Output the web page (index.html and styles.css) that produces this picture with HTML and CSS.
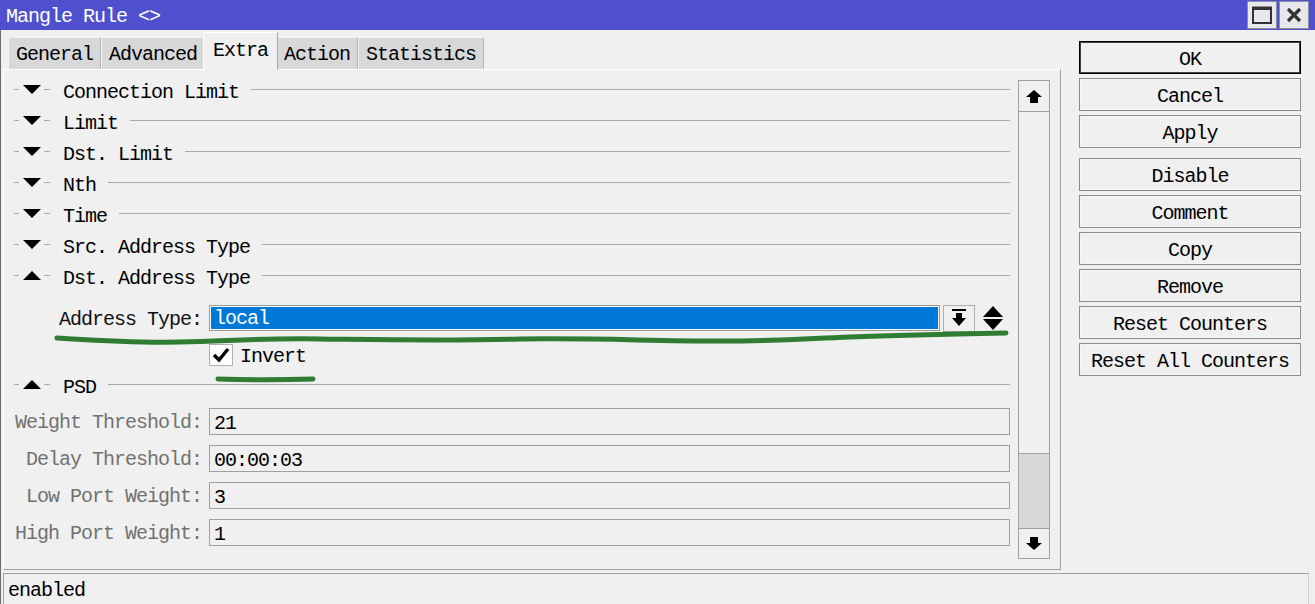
FILE: index.html
```html
<!DOCTYPE html>
<html>
<head>
<meta charset="utf-8">
<link rel="stylesheet" href="styles.css">
</head>
<body>
<div class="window">
  <div class="titlebar">
    <div class="title">Mangle Rule &lt;&gt;</div>
    <div class="wbtns">
      <div class="wbtn"><svg width="20" height="18" viewBox="0 0 20 18"><rect x="1" y="1.5" width="18" height="15.5" fill="none" stroke="#333" stroke-width="2"/><rect x="1" y="1" width="18" height="3" fill="#333"/></svg></div>
      <div class="wbtn"><svg width="18" height="18" viewBox="0 0 18 18"><path d="M3 3 L15 15 M15 3 L3 15" stroke="#333" stroke-width="3.2"/></svg></div>
    </div>
  </div>
  <div class="lower">
    <div class="main">
      <div class="leftcol">
        <div class="tabs">
          <div class="tab">General</div>
          <div class="tab">Advanced</div>
          <div class="tab active">Extra</div>
          <div class="tab">Action</div>
          <div class="tab">Statistics</div>
        </div>
        <div class="panel">
          <div class="content">
            <div class="sect"><span class="dash"></span><svg class="tri" width="18" height="9" viewBox="0 0 18 9"><path d="M0 0 H18 L9 9 Z"/></svg><span class="dash d2"></span><span class="stext">Connection Limit</span><span class="sline"></span></div>
            <div class="sect"><span class="dash"></span><svg class="tri" width="18" height="9" viewBox="0 0 18 9"><path d="M0 0 H18 L9 9 Z"/></svg><span class="dash d2"></span><span class="stext">Limit</span><span class="sline"></span></div>
            <div class="sect"><span class="dash"></span><svg class="tri" width="18" height="9" viewBox="0 0 18 9"><path d="M0 0 H18 L9 9 Z"/></svg><span class="dash d2"></span><span class="stext">Dst. Limit</span><span class="sline"></span></div>
            <div class="sect"><span class="dash"></span><svg class="tri" width="18" height="9" viewBox="0 0 18 9"><path d="M0 0 H18 L9 9 Z"/></svg><span class="dash d2"></span><span class="stext">Nth</span><span class="sline"></span></div>
            <div class="sect"><span class="dash"></span><svg class="tri" width="18" height="9" viewBox="0 0 18 9"><path d="M0 0 H18 L9 9 Z"/></svg><span class="dash d2"></span><span class="stext">Time</span><span class="sline"></span></div>
            <div class="sect"><span class="dash"></span><svg class="tri" width="18" height="9" viewBox="0 0 18 9"><path d="M0 0 H18 L9 9 Z"/></svg><span class="dash d2"></span><span class="stext">Src. Address Type</span><span class="sline"></span></div>
            <div class="sect"><span class="dash"></span><svg class="tri" width="18" height="9" viewBox="0 0 18 9"><path d="M0 9 H18 L9 0 Z"/></svg><span class="dash d2"></span><span class="stext">Dst. Address Type</span><span class="sline"></span></div>
            <div class="frow addr">
              <div class="flabel dark">Address Type:</div>
              <div class="fin sel"><span>local</span></div>
              <div class="ddbtn"><svg width="16" height="18" viewBox="0 0 16 18"><rect x="1" y="0" width="14" height="2"/><rect x="5" y="4" width="6" height="6"/><path d="M1 9 H15 L8 17 Z"/></svg></div>
              <svg class="updown" width="20" height="24" viewBox="0 0 20 24"><path d="M10 0 L20 11 H0 Z M0 13 H20 L10 24 Z"/></svg>
            </div>
            <div class="chkrow">
              <div class="chk"><svg width="18" height="16" viewBox="0 0 18 16"><path d="M2 8 L7 13 L16 2" fill="none" stroke="#000" stroke-width="3.4"/></svg></div>
              <span class="chktext">Invert</span>
            </div>
            <div class="sect psd"><span class="dash"></span><svg class="tri" width="18" height="9" viewBox="0 0 18 9"><path d="M0 9 H18 L9 0 Z"/></svg><span class="dash d2"></span><span class="stext">PSD</span><span class="sline"></span></div>
            <div class="frow fld"><div class="flabel">Weight Threshold:</div><div class="fin">21</div></div>
            <div class="frow fld"><div class="flabel">Delay Threshold:</div><div class="fin">00:00:03</div></div>
            <div class="frow fld"><div class="flabel">Low Port Weight:</div><div class="fin">3</div></div>
            <div class="frow fld"><div class="flabel">High Port Weight:</div><div class="fin">1</div></div>
          </div>
          <div class="scroll">
            <div class="sbtn"><svg width="16" height="13" viewBox="0 0 16 13"><path d="M8 0 L16 7 H12 V13 H4 V7 H0 Z"/></svg></div>
            <div class="strack"></div>
            <div class="sthumb"></div>
            <div class="sbtn down"><svg width="16" height="13" viewBox="0 0 16 13"><path d="M4 0 H12 V6 H16 L8 13 L0 6 H4 Z"/></svg></div>
          </div>
        </div>
      </div>
      <div class="btncol">
        <div class="btn ok">OK</div>
        <div class="btn">Cancel</div>
        <div class="btn">Apply</div>
        <div class="btn sep">Disable</div>
        <div class="btn">Comment</div>
        <div class="btn">Copy</div>
        <div class="btn">Remove</div>
        <div class="btn">Reset Counters</div>
        <div class="btn">Reset All Counters</div>
      </div>
    </div>
    <div class="status">enabled</div>
  </div>
  <svg class="annot" width="1315" height="604" viewBox="0 0 1315 604">
    <path d="M57 338 C90 340 130 343 180 342 C230 341 260 338 320 339 C400 340 450 341 520 339 C600 338 650 341 720 341 C780 341 800 339 850 337 C900 335 950 334 1006 333" fill="none" stroke="#2e7d32" stroke-width="5" stroke-linecap="round"/>
    <path d="M218 379 C250 380 280 380 313 379" fill="none" stroke="#2e7d32" stroke-width="5" stroke-linecap="round"/>
  </svg>
</div>
</body>
</html>
```

FILE: styles.css
```css
* { box-sizing: border-box; }
html, body { margin: 0; padding: 0; }
body {
  width: 1315px;
  height: 604px;
  overflow: hidden;
  background: #f0f0f0;
  font-family: "Liberation Mono", "DejaVu Sans Mono", monospace;
  font-size: 20px;
  letter-spacing: -1px;
  color: #000;
}
.window {
  position: relative;
  width: 1315px;
  height: 604px;
  display: flex;
  flex-direction: column;
}
.titlebar {
  height: 30px;
  background: #4e50ce;
  display: flex;
  align-items: center;
  justify-content: space-between;
  padding-left: 6px;
  padding-right: 6px;
}
.title {
  color: #fff;
  line-height: 30px;
  padding-top: 3px;
}
.wbtns {
  display: flex;
  gap: 2px;
  align-self: flex-start;
  margin-top: 1px;
}
.wbtn {
  width: 30px;
  height: 28px;
  background: #e9e7ee;
  border: 1px solid #8e8e9e;
  display: flex;
  align-items: center;
  justify-content: center;
}
.lower {
  flex: 1;
  display: flex;
  flex-direction: column;
  border-left: 1px solid #6c6c6c;
}
.main {
  flex: 1;
  display: flex;
}
.leftcol {
  margin-left: 2px;
  width: 1058px;
  display: flex;
  flex-direction: column;
}
.tabs {
  height: 39px;
  display: flex;
  align-items: flex-end;
  padding-left: 5px;
}
.tab {
  height: 32px;
  padding: 1px 7px 0 7px;
  line-height: 31px;
  background: #d8d8d8;
  border-left: 1px solid #f4f4f4;
  border-top: 1px solid #f4f4f4;
  border-right: 1px solid #b4b4b4;
  white-space: nowrap;
}
.tab.active {
  height: 38px;
  margin: 0 -2px -1px -2px;
  padding: 0 9px 0 9px;
  line-height: 36px;
  background: #f0f0f0;
  border-left: 1px solid #ffffff;
  border-top: 1px solid #ffffff;
  border-right: 1px solid #a8a8a8;
  position: relative;
  z-index: 2;
}
.panel {
  height: 501px;
  border-top: 1px solid #ffffff;
  border-left: 1px solid #ffffff;
  border-right: 1px solid #a0a0a0;
  border-bottom: 1px solid #a0a0a0;
  display: flex;
  padding: 10px 10px 10px 10px;
  gap: 8px;
}
.content {
  width: 996px;
  display: flex;
  flex-direction: column;
  margin-top: -4px;
}
.sect {
  height: 31px;
  display: flex;
  align-items: center;
}
.dash {
  width: 5px;
  height: 1px;
  background: #a8a8a8;
  margin-top: -5px;
}
.tri {
  margin-left: 4px;
  margin-top: -5px;
  fill: #000;
}
.dash.d2 {
  margin-left: 3px;
  width: 6px;
}
.stext {
  margin-left: 13px;
  white-space: nowrap;
  padding-top: 2px;
}
.sline {
  flex: 1;
  height: 1px;
  background: #a8a8a8;
  margin-left: 12px;
  margin-top: -5px;
}
.frow {
  display: flex;
  align-items: center;
}
.flabel {
  width: 188px;
  text-align: right;
  color: #727272;
  white-space: nowrap;
  margin-right: 7px;
  padding-top: 2px;
}
.flabel.dark { color: #111; }
.fin {
  flex: 1;
  height: 27px;
  border: 1px solid #a0a0a0;
  line-height: 25px;
  padding-left: 4px;
  padding-top: 2px;
}
.addr {
  margin-top: 12px;
  height: 26px;
}
.addr .fin {
  flex: none;
  width: 731px;
  height: 26px;
  padding: 0;
  border: 1px solid #9a9a9a;
}
.fin.sel span {
  display: block;
  height: 100%;
  background: #0078d7;
  border: 1px solid #fff;
  color: #fff;
  line-height: 24px;
  padding-left: 3px;
}
.ddbtn {
  margin-left: 3px;
  width: 32px;
  height: 27px;
  border: 1px solid #adadad;
  display: flex;
  align-items: center;
  justify-content: center;
}
.ddbtn svg { fill: #000; }
.updown {
  margin-left: 8px;
  fill: #000;
}
.chkrow {
  margin-top: 13px;
  height: 22px;
  display: flex;
  align-items: center;
  padding-left: 195px;
}
.chk {
  width: 24px;
  height: 22px;
  background: #fff;
  border: 1px solid #b0b0b0;
  display: flex;
  align-items: center;
  justify-content: center;
}
.chktext {
  margin-left: 7px;
  padding-top: 2px;
}
.psd {
  margin-top: 5px;
}
.fld {
  margin-top: 6px;
}
.fld + .fld {
  margin-top: 10px;
}
.scroll {
  width: 32px;
  height: 479px;
  border: 1px solid #a0a0a0;
  display: flex;
  flex-direction: column;
}
.sbtn {
  height: 31px;
  border-bottom: 1px solid #a0a0a0;
  display: flex;
  align-items: center;
  justify-content: center;
}
.sbtn svg { fill: #000; }
.sbtn.down {
  border-bottom: none;
  border-top: 1px solid #a0a0a0;
  height: 30px;
}
.strack { flex: 1; }
.sthumb {
  height: 75px;
  background: #d8d8d8;
  border-top: 1px solid #a0a0a0;
}
.btncol {
  margin-left: 18px;
  margin-top: 11px;
  width: 222px;
  display: flex;
  flex-direction: column;
  gap: 4px;
}
.btn {
  height: 33px;
  border: 1px solid #8c8c8c;
  box-shadow: inset 0 0 0 1px #f6f6f6;
  text-align: center;
  line-height: 31px;
  padding-top: 2px;
  white-space: nowrap;
}
.btn.ok {
  border: 1px solid #000;
  box-shadow: inset 0 0 0 1px #444;
}
.btn.sep { margin-top: 6px; }
.status {
  height: 31px;
  margin-left: 2px;
  width: 1306px;
  border-top: 1px solid #a0a0a0;
  border-left: 1px solid #a0a0a0;
  border-right: 1px solid #d0d0d0;
  padding-left: 4px;
  padding-top: 2px;
  line-height: 30px;
}
.annot {
  position: absolute;
  left: 0;
  top: 0;
  pointer-events: none;
}
```
